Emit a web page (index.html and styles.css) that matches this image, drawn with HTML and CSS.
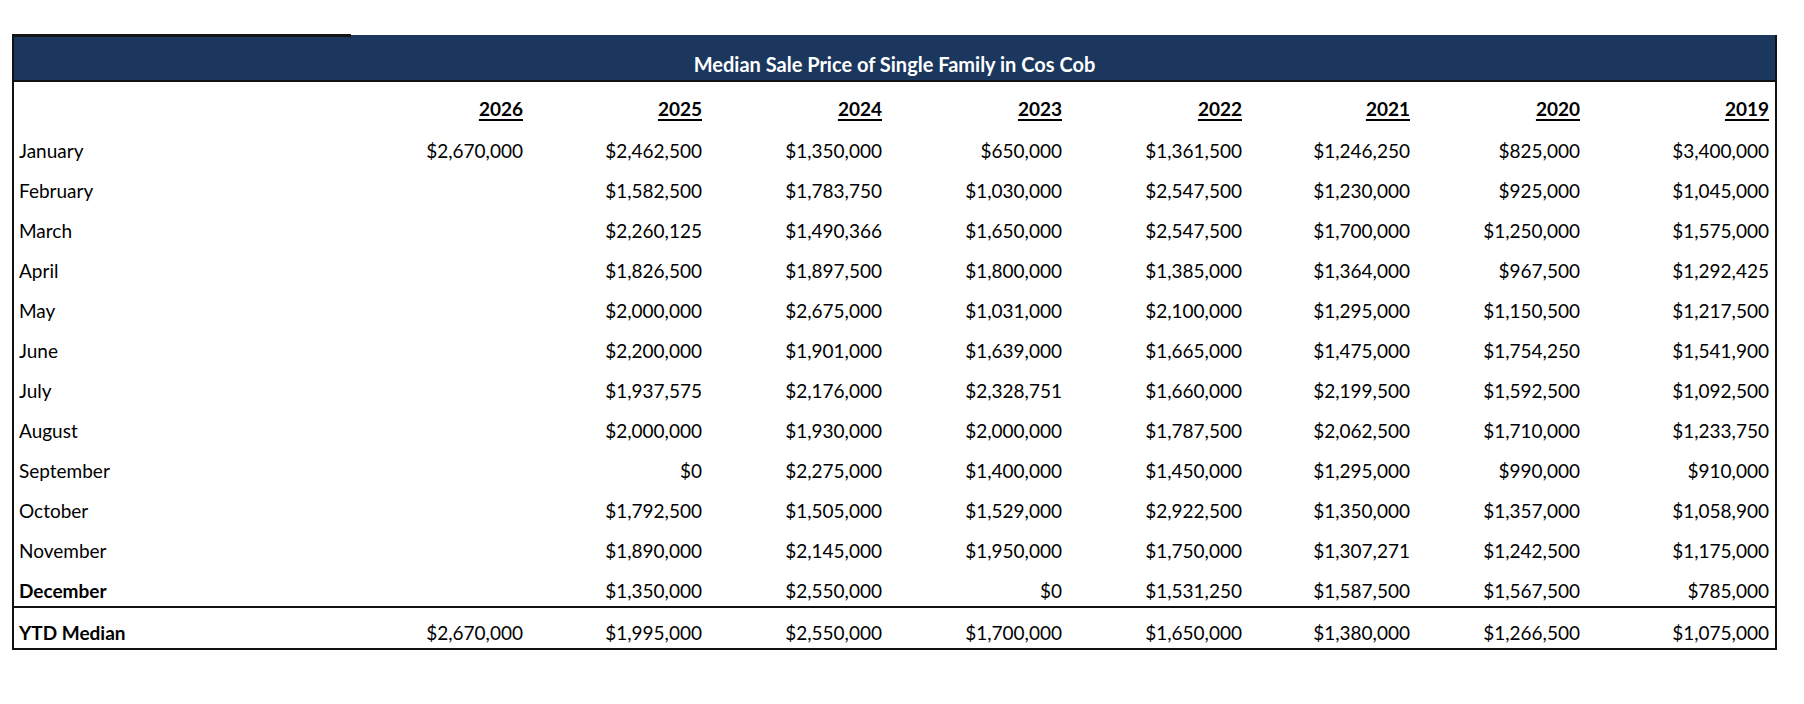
FILE: index.html
```html
<!DOCTYPE html>
<html lang="en">
<head>
<meta charset="utf-8">
<title>Median Sale Price of Single Family in Cos Cob</title>
<link rel="stylesheet" href="styles.css">
</head>
<body>
<div class="sheet">
  <div class="title">Median Sale Price of Single Family in Cos Cob</div>
  <div class="row head">
    <div class="c lbl"></div>
    <div class="c"><u>2026</u></div><div class="c"><u>2025</u></div><div class="c"><u>2024</u></div><div class="c"><u>2023</u></div><div class="c"><u>2022</u></div><div class="c"><u>2021</u></div><div class="c"><u>2020</u></div><div class="c"><u>2019</u></div>
  </div>
  <div class="row"><div class="c lbl">January</div><div class="c">$2,670,000</div><div class="c">$2,462,500</div><div class="c">$1,350,000</div><div class="c">$650,000</div><div class="c">$1,361,500</div><div class="c">$1,246,250</div><div class="c">$825,000</div><div class="c">$3,400,000</div></div>
  <div class="row"><div class="c lbl">February</div><div class="c"></div><div class="c">$1,582,500</div><div class="c">$1,783,750</div><div class="c">$1,030,000</div><div class="c">$2,547,500</div><div class="c">$1,230,000</div><div class="c">$925,000</div><div class="c">$1,045,000</div></div>
  <div class="row"><div class="c lbl">March</div><div class="c"></div><div class="c">$2,260,125</div><div class="c">$1,490,366</div><div class="c">$1,650,000</div><div class="c">$2,547,500</div><div class="c">$1,700,000</div><div class="c">$1,250,000</div><div class="c">$1,575,000</div></div>
  <div class="row"><div class="c lbl">April</div><div class="c"></div><div class="c">$1,826,500</div><div class="c">$1,897,500</div><div class="c">$1,800,000</div><div class="c">$1,385,000</div><div class="c">$1,364,000</div><div class="c">$967,500</div><div class="c">$1,292,425</div></div>
  <div class="row"><div class="c lbl">May</div><div class="c"></div><div class="c">$2,000,000</div><div class="c">$2,675,000</div><div class="c">$1,031,000</div><div class="c">$2,100,000</div><div class="c">$1,295,000</div><div class="c">$1,150,500</div><div class="c">$1,217,500</div></div>
  <div class="row"><div class="c lbl">June</div><div class="c"></div><div class="c">$2,200,000</div><div class="c">$1,901,000</div><div class="c">$1,639,000</div><div class="c">$1,665,000</div><div class="c">$1,475,000</div><div class="c">$1,754,250</div><div class="c">$1,541,900</div></div>
  <div class="row"><div class="c lbl">July</div><div class="c"></div><div class="c">$1,937,575</div><div class="c">$2,176,000</div><div class="c">$2,328,751</div><div class="c">$1,660,000</div><div class="c">$2,199,500</div><div class="c">$1,592,500</div><div class="c">$1,092,500</div></div>
  <div class="row"><div class="c lbl">August</div><div class="c"></div><div class="c">$2,000,000</div><div class="c">$1,930,000</div><div class="c">$2,000,000</div><div class="c">$1,787,500</div><div class="c">$2,062,500</div><div class="c">$1,710,000</div><div class="c">$1,233,750</div></div>
  <div class="row"><div class="c lbl">September</div><div class="c"></div><div class="c">$0</div><div class="c">$2,275,000</div><div class="c">$1,400,000</div><div class="c">$1,450,000</div><div class="c">$1,295,000</div><div class="c">$990,000</div><div class="c">$910,000</div></div>
  <div class="row"><div class="c lbl">October</div><div class="c"></div><div class="c">$1,792,500</div><div class="c">$1,505,000</div><div class="c">$1,529,000</div><div class="c">$2,922,500</div><div class="c">$1,350,000</div><div class="c">$1,357,000</div><div class="c">$1,058,900</div></div>
  <div class="row"><div class="c lbl">November</div><div class="c"></div><div class="c">$1,890,000</div><div class="c">$2,145,000</div><div class="c">$1,950,000</div><div class="c">$1,750,000</div><div class="c">$1,307,271</div><div class="c">$1,242,500</div><div class="c">$1,175,000</div></div>
  <div class="row last"><div class="c lbl bold">December</div><div class="c"></div><div class="c">$1,350,000</div><div class="c">$2,550,000</div><div class="c">$0</div><div class="c">$1,531,250</div><div class="c">$1,587,500</div><div class="c">$1,567,500</div><div class="c">$785,000</div></div>
  <div class="row ytd"><div class="c lbl bold">YTD Median</div><div class="c">$2,670,000</div><div class="c">$1,995,000</div><div class="c">$2,550,000</div><div class="c">$1,700,000</div><div class="c">$1,650,000</div><div class="c">$1,380,000</div><div class="c">$1,266,500</div><div class="c">$1,075,000</div></div>
</div>
</body>
</html>
```
FILE: styles.css
```css
html, body {
  margin: 0;
  padding: 0;
  background: #ffffff;
}

body {
  font-family: Lato, "Open Sans", "Liberation Sans", sans-serif;
  color: #000;
}

.sheet {
  position: relative;
  margin: 35px 0 0 12px;
  width: 1761px;
  border-left: 2px solid #111;
  border-right: 2px solid #111;
  border-bottom: 2px solid #111;
}

.sheet::before {
  content: "";
  position: absolute;
  top: -1px;
  left: -2px;
  width: 339px;
  height: 3px;
  background: #151515;
}

.title {
  height: 47px;
  box-sizing: border-box;
  padding-top: 14px;
  line-height: 31px;
  background: #1b375e;
  border-bottom: 2px solid #111;
  color: #fff;
  font-weight: 700;
  font-size: 20px;
  text-align: center;
}

.row {
  display: grid;
  grid-template-columns: 337px 178px 179px 180px 180px 180px 168px 170px 189px;
  height: 40px;
  box-sizing: border-box;
  font-size: 19px;
}

.c {
  padding: 10px 6px 0 0;
  line-height: 30px;
  text-align: right;
  white-space: nowrap;
}

.c.lbl {
  text-align: left;
  padding-left: 5px;
  padding-right: 0;
}

.bold {
  font-weight: 700;
}

.row.head {
  height: 44px;
  font-weight: 700;
}

.row.head .c {
  padding-top: 12px;
}

.row.head u {
  text-decoration-thickness: 2px;
  text-underline-offset: 3px;
}

.row.last {
  height: 42px;
  border-bottom: 2px solid #111;
}

.row.ytd {
  height: 40px;
}
```
